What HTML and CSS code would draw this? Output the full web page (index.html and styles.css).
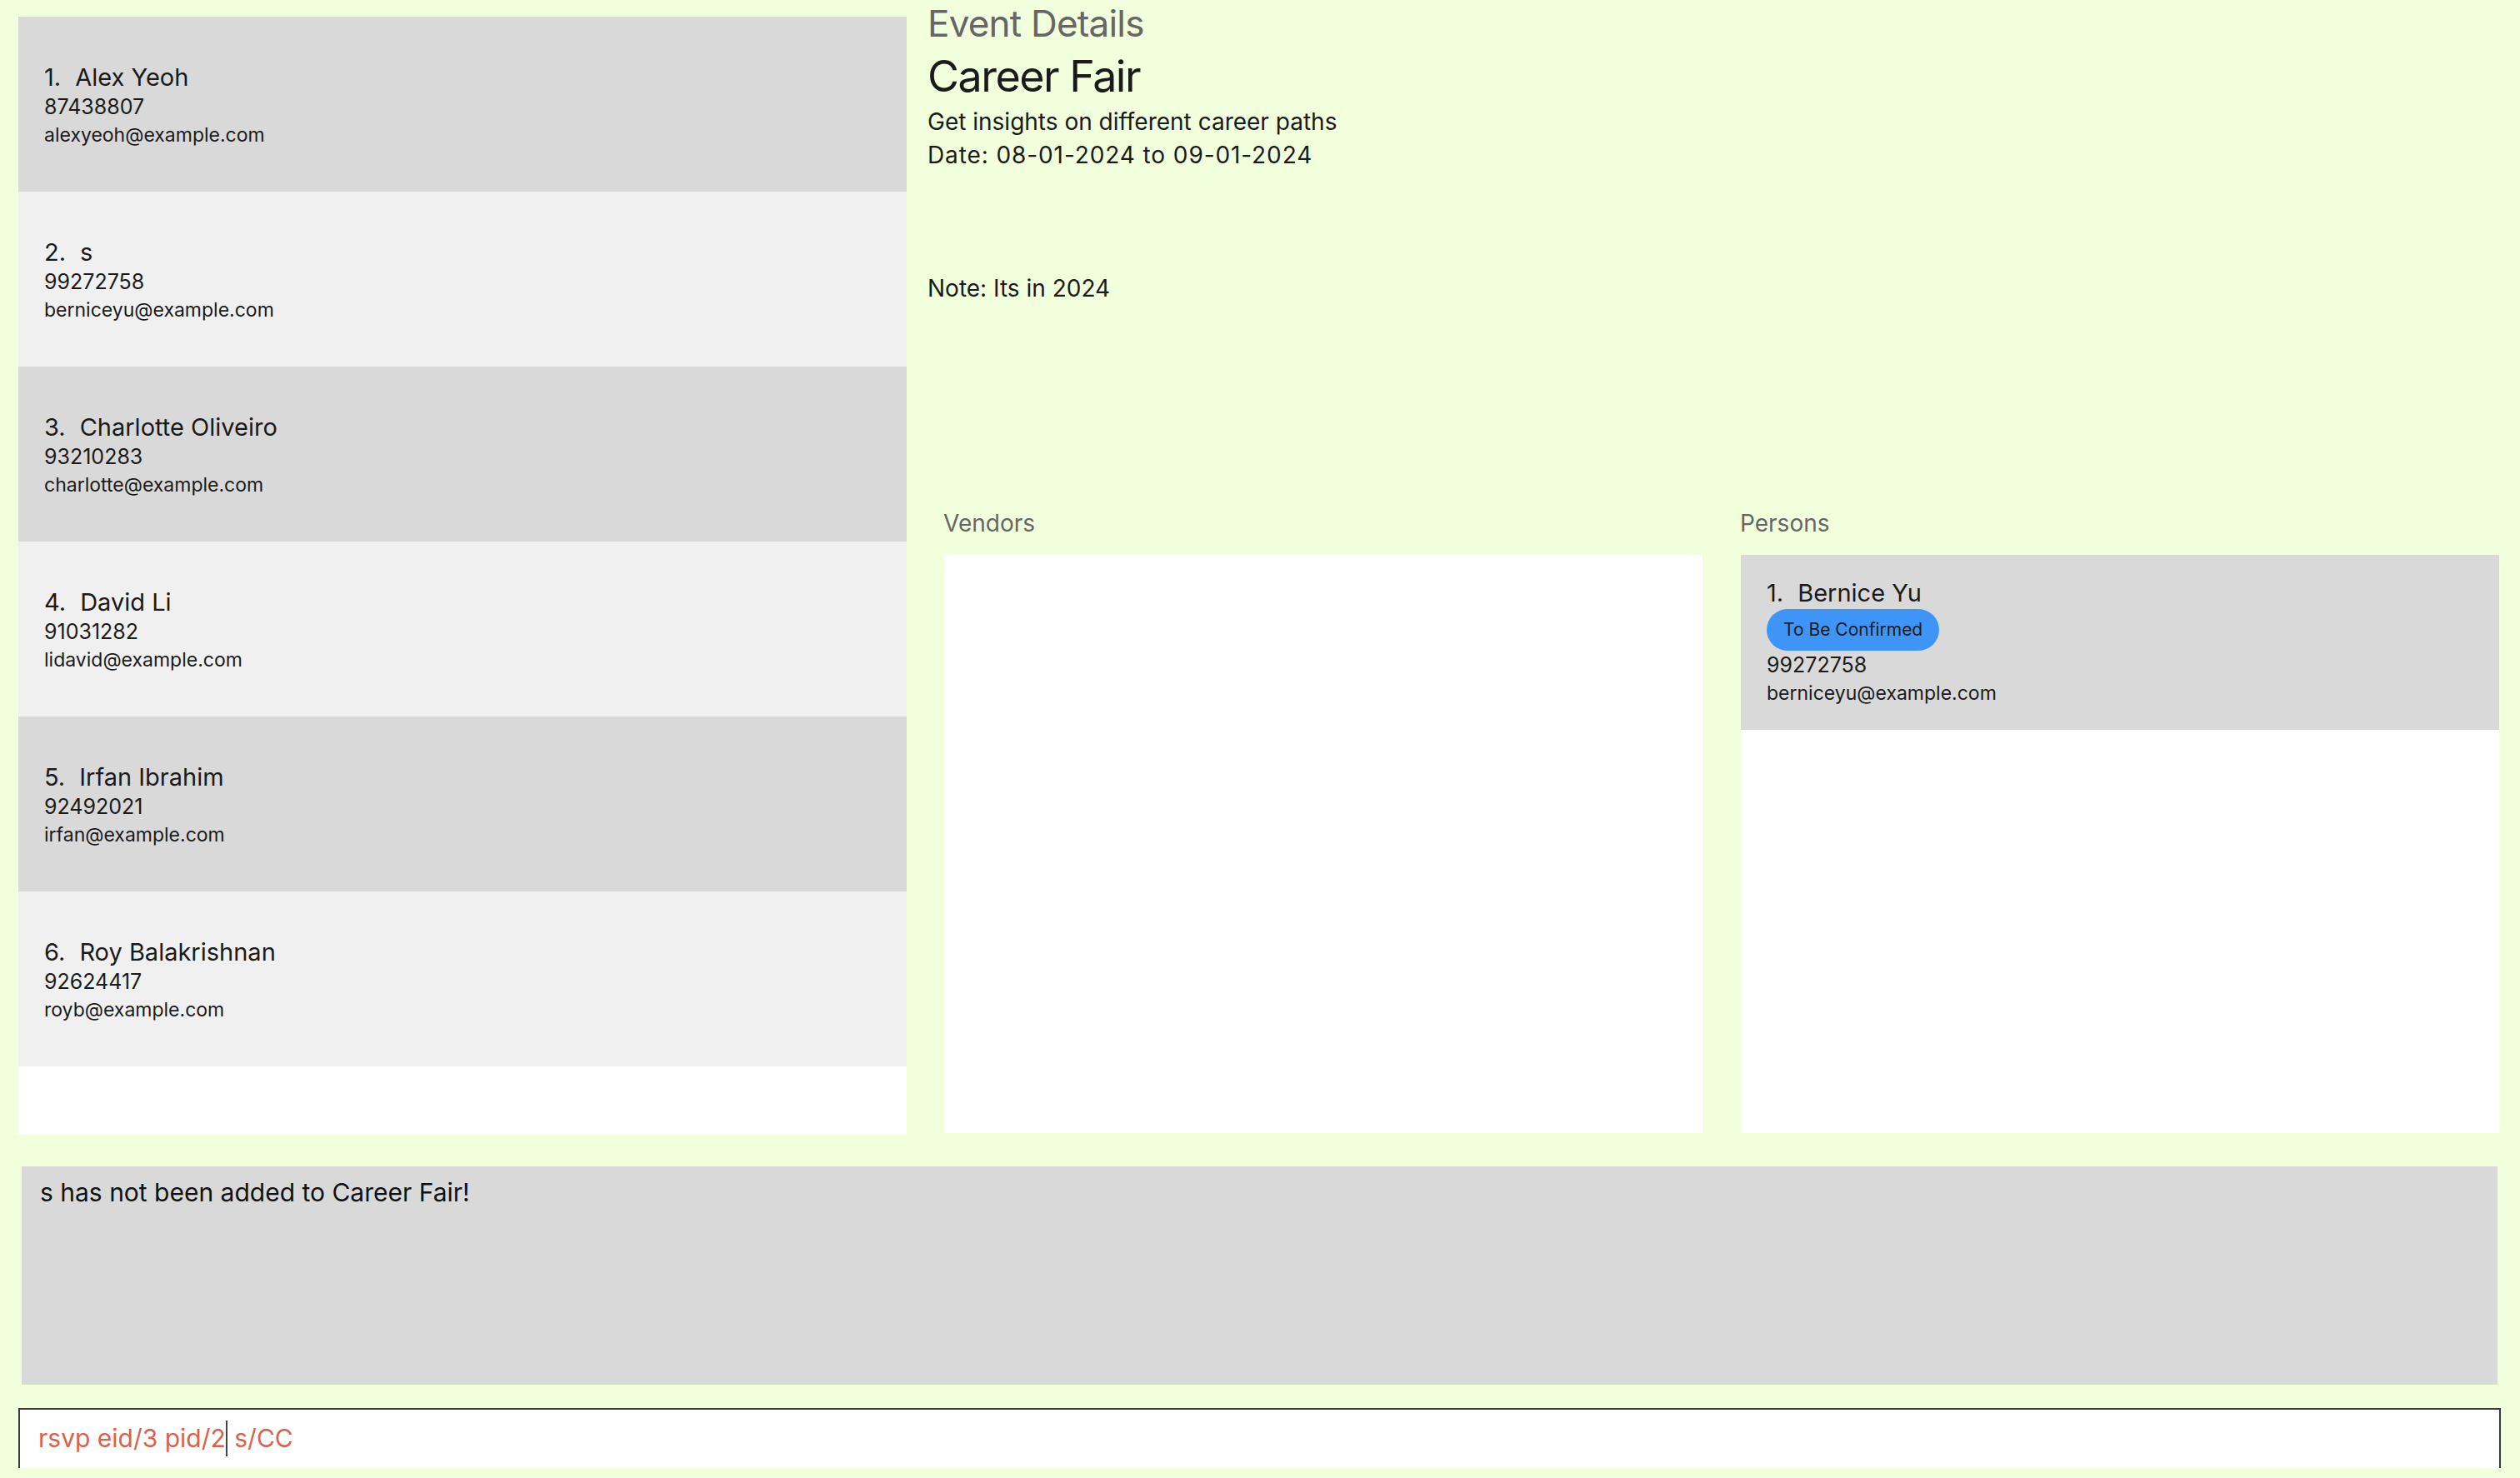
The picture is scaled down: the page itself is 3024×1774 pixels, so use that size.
FILE: index.html
```html
<!DOCTYPE html>
<html lang="en">
<head>
<meta charset="utf-8">
<title>Event Details</title>
<link rel="stylesheet" href="styles.css">
</head>
<body>
<div class="app">
  <div class="top">
    <div class="list">
      <div class="card dark">
        <div class="name"><span class="idx">1.</span>Alex Yeoh</div>
        <div class="phone">87438807</div>
        <div class="email">alexyeoh@example.com</div>
      </div>
      <div class="card light">
        <div class="name"><span class="idx">2.</span>s</div>
        <div class="phone">99272758</div>
        <div class="email">berniceyu@example.com</div>
      </div>
      <div class="card dark">
        <div class="name"><span class="idx">3.</span>Charlotte Oliveiro</div>
        <div class="phone">93210283</div>
        <div class="email">charlotte@example.com</div>
      </div>
      <div class="card light">
        <div class="name"><span class="idx">4.</span>David Li</div>
        <div class="phone">91031282</div>
        <div class="email">lidavid@example.com</div>
      </div>
      <div class="card dark">
        <div class="name"><span class="idx">5.</span>Irfan Ibrahim</div>
        <div class="phone">92492021</div>
        <div class="email">irfan@example.com</div>
      </div>
      <div class="card light">
        <div class="name"><span class="idx">6.</span>Roy Balakrishnan</div>
        <div class="phone">92624417</div>
        <div class="email">royb@example.com</div>
      </div>
    </div>
    <div class="right">
      <div class="details">
        <div class="heading">Event Details</div>
        <div class="title">Career Fair</div>
        <div class="line">Get insights on different career paths</div>
        <div class="line date">Date: 08-01-2024 to 09-01-2024</div>
        <div class="line note">Note: Its in 2024</div>
      </div>
      <div class="panels">
        <div class="panel">
          <div class="label">Vendors</div>
          <div class="box"></div>
        </div>
        <div class="panel">
          <div class="label">Persons</div>
          <div class="box">
            <div class="card dark pcard">
              <div class="name"><span class="idx">1.</span>Bernice Yu</div>
              <div class="badge">To Be Confirmed</div>
              <div class="phone">99272758</div>
              <div class="email">berniceyu@example.com</div>
            </div>
          </div>
        </div>
      </div>
    </div>
  </div>
  <div class="result">s has not been added to Career Fair!</div>
  <div class="command"><span>rsvp eid/3 pid/2</span><span class="caret"></span><span> s/CC</span></div>
</div>
</body>
</html>
```
FILE: styles.css
```css
html, body {
  margin: 0;
  padding: 0;
}
body {
  width: 3024px;
  height: 1774px;
  overflow: hidden;
  background: #f1ffdd;
  font-family: Inter, "Noto Sans", sans-serif;
  color: #1a1a1a;
}
.app {
  display: flex;
  flex-direction: column;
}
.top {
  display: flex;
  height: 1380px;
}
.list {
  margin: 20px 0 0 22px;
  width: 1066px;
  height: 1342px;
  background: #ffffff;
  display: flex;
  flex-direction: column;
}
.card {
  height: 210px;
  box-sizing: border-box;
  padding: 55px 31px 0 31px;
  flex-shrink: 0;
}
.dark { background: #d9d9d9; }
.light { background: #f0f0f0; }
.name {
  font-size: 29px;
  line-height: 36px;
  white-space: nowrap;
}
.idx {
  margin-right: 17px;
}
.phone {
  font-size: 25px;
  line-height: 34px;
}
.email {
  font-size: 23px;
  line-height: 34px;
}
.right {
  margin-left: 22px;
  flex: 1;
  display: flex;
  flex-direction: column;
}
.details {
  height: 611px;
  padding-left: 3px;
  box-sizing: border-box;
}
.heading {
  font-size: 44px;
  line-height: 56px;
  letter-spacing: -0.8px;
  color: #666666;
}
.title {
  margin-top: 2px;
  font-size: 52px;
  line-height: 68px;
  letter-spacing: -1.5px;
  color: #1a1a1a;
}
.line {
  font-size: 28px;
  line-height: 40px;
}
.date {
  letter-spacing: 0.9px;
}
.note {
  margin-top: 120px;
}
.panels {
  display: flex;
}
.panel {
  width: 956px;
  box-sizing: border-box;
  padding: 0 23px;
}
.label {
  font-size: 28px;
  line-height: 34px;
  color: #666666;
  margin-left: -1px;
}
.box {
  margin-top: 21px;
  height: 694px;
  background: #ffffff;
}
.pcard {
  padding-top: 28px;
}
.badge {
  display: inline-block;
  margin-top: 1px;
  height: 50px;
  line-height: 50px;
  padding: 0 20px;
  border-radius: 25px;
  background: #3e95f7;
  color: #1a1a1a;
  font-size: 21px;
}
.result {
  margin: 20px 0 0 26px;
  width: 2971px;
  height: 262px;
  box-sizing: border-box;
  padding: 11px 22px 0 22px;
  background: #d9d9d9;
  font-size: 30px;
  line-height: 40px;
  color: #111111;
}
.command {
  margin: 28px 0 0 22px;
  width: 2979px;
  height: 72px;
  box-sizing: border-box;
  border: 2px solid #3a3a3a;
  border-bottom: none;
  background: #ffffff;
  padding: 14px 22px 0 22px;
  font-size: 30px;
  line-height: 40px;
  color: #d6634f;
  white-space: pre;
  display: flex;
  align-items: flex-start;
}
.caret {
  width: 2px;
  height: 43px;
  margin-top: -1px;
  background: #444444;
}
```
